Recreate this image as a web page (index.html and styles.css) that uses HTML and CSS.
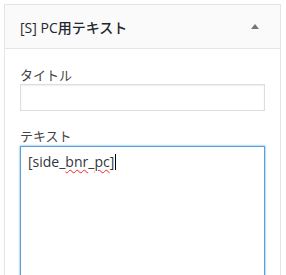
FILE: index.html
```html
<!DOCTYPE html>
<html lang="ja">
<head>
  <meta charset="UTF-8" />
  <title>ウィジェット</title>
  <link rel="stylesheet" href="styles.css">
</head>
<body>
  <div class="widget">
    <div class="widget-top">
      <h3 class="widget-title">[S] PC用テキスト</h3>
      <span class="toggle"></span>
    </div>
    <div class="widget-inside">
      <div class="field">
        <label>タイトル</label>
        <input type="text" class="widefat" />
      </div>
      <div class="field">
        <label>テキスト</label>
        <div class="textarea">[side_<span class="typo">bnr</span>_<span class="typo">pc</span>]<span class="caret"></span></div>
      </div>
    </div>
  </div>
</body>
</html>
```

FILE: styles.css
```css
body {
  margin: 0;
  padding: 4px 0 0 4px;
  background: #fff;
  font-family: "Open Sans", "Noto Sans CJK JP", sans-serif;
  color: #23282d;
  overflow: hidden;
}
.widget {
  width: 275px;
  border: 1px solid #e5e5e5;
  background: #fff;
  height: 300px;
}
.widget-top {
  display: flex;
  align-items: center;
  justify-content: space-between;
  height: 43px;
  padding: 0 21px 0 15px;
  background: #fafafa;
  border-bottom: 1px solid #e5e5e5;
}
.widget-title {
  margin: 0;
  font-size: 14px;
  font-weight: 500;
  color: #23282d;
}
.toggle {
  width: 0;
  height: 0;
  border-left: 4px solid transparent;
  border-right: 4px solid transparent;
  border-bottom: 5px solid #72777c;
  margin-top: -1px;
}
.widget-inside {
  padding: 17px 15px 0;
}
.field {
  margin: 0 0 16px;
}
label {
  display: block;
  font-size: 13px;
  color: #444;
  line-height: 18px;
}
.widefat {
  display: block;
  box-sizing: border-box;
  width: 245px;
  height: 27px;
  margin: 0;
  border: 1px solid #ddd;
  box-shadow: inset 0 1px 2px rgba(0,0,0,0.07);
}
.textarea {
  box-sizing: border-box;
  width: 245px;
  height: 200px;
  margin-top: 1px;
  padding: 5px 7px;
  border: 1px solid #5b9dd9;
  box-shadow: 0 0 2px rgba(30,140,190,0.8);
  font-size: 14px;
  line-height: 20px;
  color: #32373c;
}
.typo {
  text-decoration: underline wavy #e22;
  text-decoration-thickness: 1px;
  text-underline-offset: 2px;
}
.caret {
  display: inline-block;
  width: 1px;
  height: 16px;
  background: #000;
  vertical-align: -3px;
  margin-left: 1px;
}
```
